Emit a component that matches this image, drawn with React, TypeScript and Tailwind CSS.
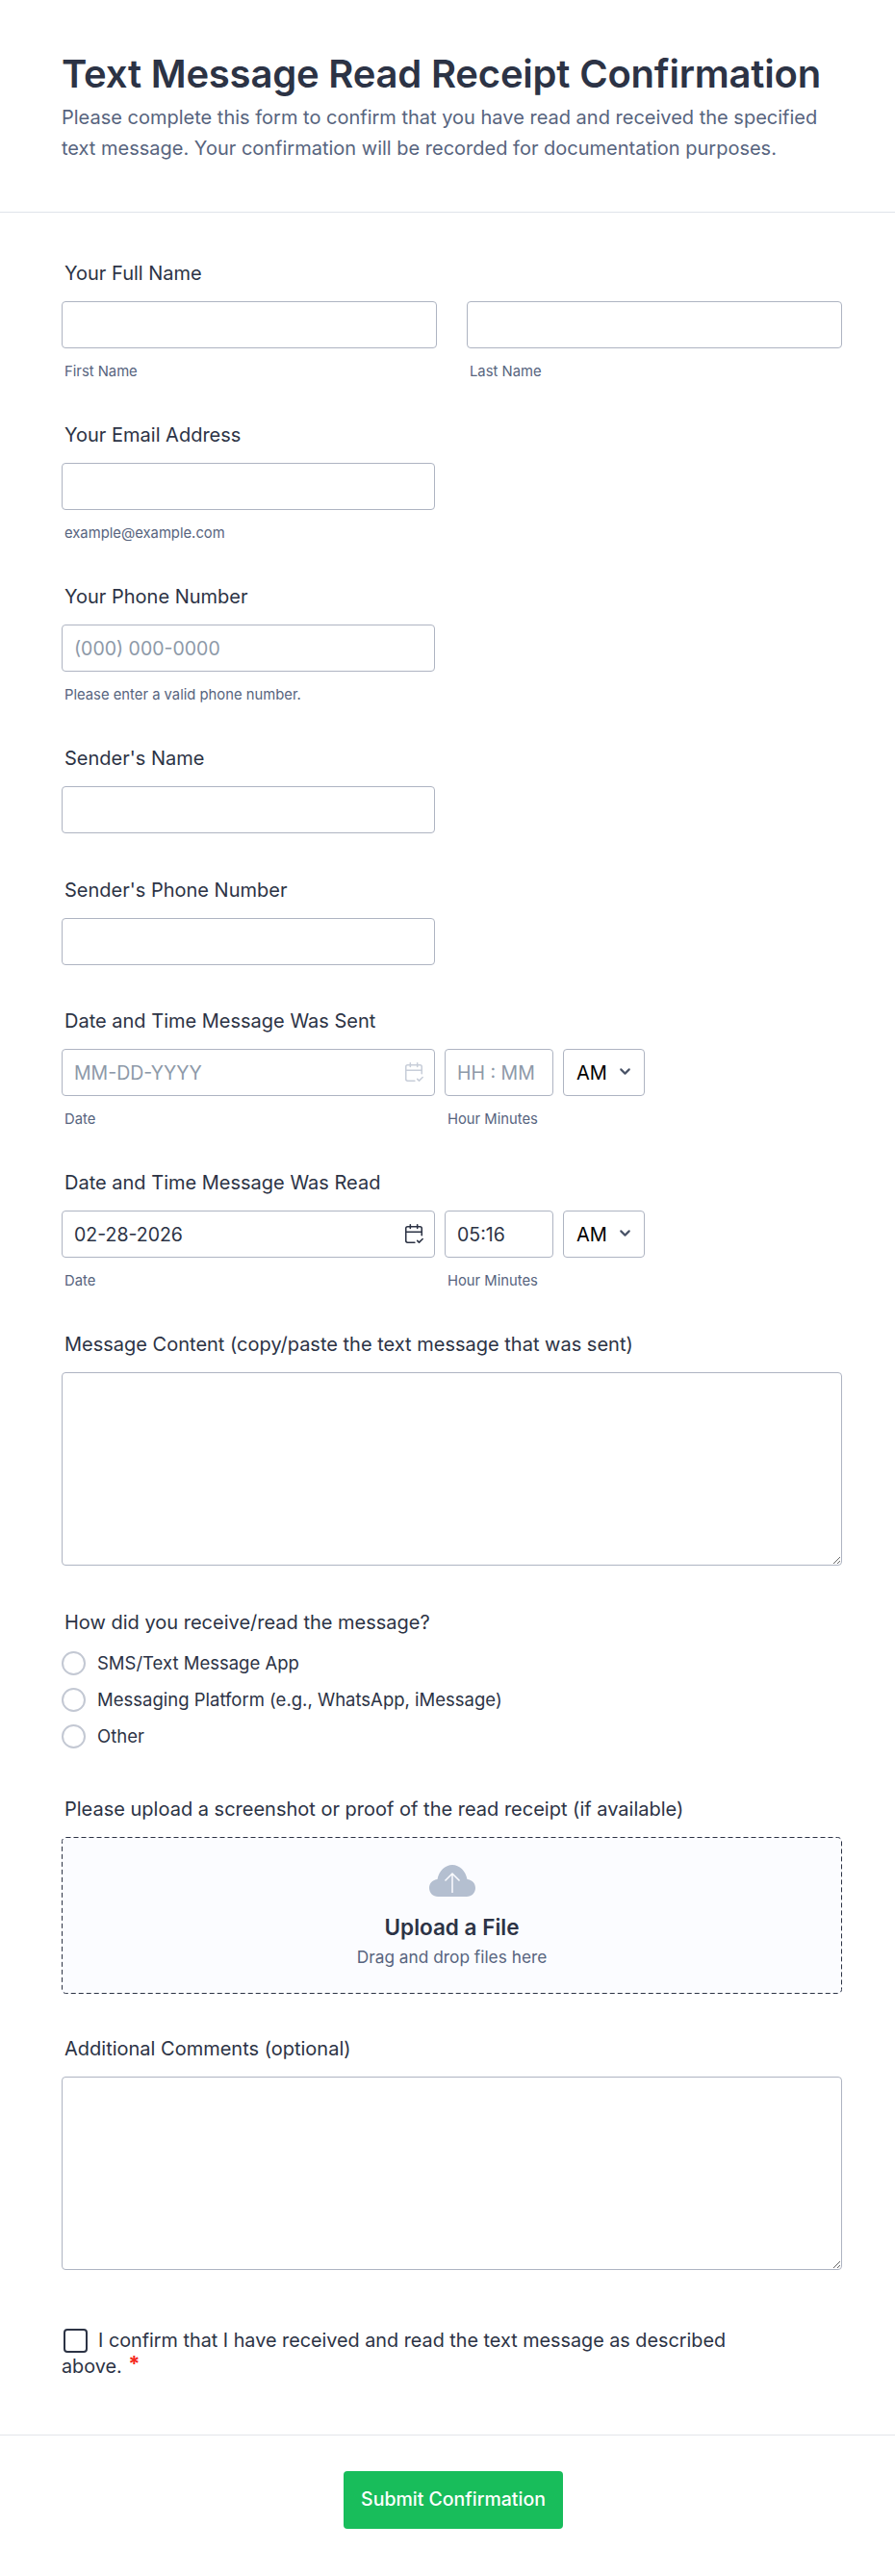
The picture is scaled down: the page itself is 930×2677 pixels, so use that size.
import { CalendarCheck2, ChevronDown } from 'lucide-react'

const inputClass =
  'h-[49px] w-full rounded-[4px] border border-[#aeb4c2] bg-white px-[12px] text-[19.5px] text-[#2c3345] outline-none placeholder:text-[#8d99a8]'

function Label({ children }: { children: React.ReactNode }) {
  return <label className="mb-[17px] block pl-[3px] text-[20px] leading-[24px] font-normal text-[#2c3345]">{children}</label>
}

function Sub({ children }: { children: React.ReactNode }) {
  return <p className="mt-[16px] pl-[3px] text-[14.8px] leading-[16px] text-[#57647e]">{children}</p>
}

function DateTimeField({ label, date, time }: { label: string; date?: string; time?: string }) {
  return (
    <div className="mb-[46px]">
      <Label>{label}</Label>
      <div className="flex w-[606px] items-start">
        <div className="w-[388px]">
          <div className="relative">
            <input className={inputClass} placeholder="MM-DD-YYYY" defaultValue={date} />
            <CalendarCheck2
              size={22}
              strokeWidth={1.7}
              className={`absolute top-[13px] right-[11px] ${date ? 'text-[#2c3345]' : 'text-[#c8ced9]'}`}
            />
          </div>
          <Sub>Date</Sub>
        </div>
        <div className="ml-[10px] w-[113px]">
          <input className={inputClass} placeholder="HH : MM" defaultValue={time} />
          <Sub>Hour Minutes</Sub>
        </div>
        <div className="relative ml-[10px] flex h-[49px] w-[85px] items-center rounded-[4px] border border-[#aeb4c2] pl-[13px] text-[20px] text-black">
          AM
          <ChevronDown size={17} strokeWidth={3} className="absolute top-[14px] right-[11px] text-[#4a5468]" />
        </div>
      </div>
    </div>
  )
}

function Radio({ children }: { children: React.ReactNode }) {
  return (
    <div className="flex h-[38px] items-center">
      <span className="h-[25px] w-[25px] rounded-full border-2 border-[#c3c8d3] bg-white" />
      <span className="ml-[12px] text-[18.5px] leading-[24px] text-[#2c3345]">{children}</span>
    </div>
  )
}

export default function App() {
  return (
    <div className="min-h-[2677px] bg-white font-['Inter',sans-serif] text-[#2c3345]">
      {/* Header */}
      <div className="h-[221px] border-b border-[#dfe3ea] px-[64px] pt-[52px]">
        <h1 className="text-[40px] leading-[50px] font-semibold tracking-[-0.2px] text-[#2c3345]">Text Message Read Receipt Confirmation</h1>
        <p className="mt-[4px] w-[800px] text-[20px] leading-[32px] text-[#57647e]">
          Please complete this form to confirm that you have read and received the specified text message. Your
          confirmation will be recorded for documentation purposes.
        </p>
      </div>

      <div className="pt-[51px] pr-[55px] pl-[64px]">
        {/* Full name */}
        <div className="mb-[46px]">
          <Label>Your Full Name</Label>
          <div className="flex gap-[31px]">
            <div className="w-[390px]">
              <input className={inputClass} />
              <Sub>First Name</Sub>
            </div>
            <div className="w-[390px]">
              <input className={inputClass} />
              <Sub>Last Name</Sub>
            </div>
          </div>
        </div>

        <div className="mb-[46px] w-[388px]">
          <Label>Your Email Address</Label>
          <input className={inputClass} />
          <Sub>example@example.com</Sub>
        </div>

        <div className="mb-[46px] w-[388px]">
          <Label>Your Phone Number</Label>
          <input className={inputClass} placeholder="(000) 000-0000" />
          <Sub>Please enter a valid phone number.</Sub>
        </div>

        <div className="mb-[47px] w-[388px]">
          <Label>Sender's Name</Label>
          <input className={inputClass} />
        </div>

        <div className="mb-[46px] w-[388px]">
          <Label>Sender's Phone Number</Label>
          <input className={inputClass} />
        </div>

        <DateTimeField label="Date and Time Message Was Sent" />
        <DateTimeField label="Date and Time Message Was Read" date="02-28-2026" time="05:16" />

        <div className="mb-[47px]">
          <Label>Message Content (copy/paste the text message that was sent)</Label>
          <textarea className="block h-[201px] w-full rounded-[4px] border border-[#aeb4c2] outline-none" />
        </div>

        {/* Receive method */}
        <div className="mb-[45px]">
          <label className="mb-[11px] block pl-[3px] text-[20px] leading-[24px] font-normal text-[#2c3345]">
            How did you receive/read the message?
          </label>
          <Radio>SMS/Text Message App</Radio>
          <Radio>Messaging Platform (e.g., WhatsApp, iMessage)</Radio>
          <Radio>Other</Radio>
        </div>

        {/* Upload */}
        <div className="mb-[45px]">
          <Label>Please upload a screenshot or proof of the read receipt (if available)</Label>
          <div className="relative flex h-[163px] flex-col items-center rounded-[4px] bg-[#fbfcff] pt-[29px]">
            {/* dashed outline, longer dashes than border-dashed gives */}
            <svg className="absolute inset-0 h-full w-full" fill="none">
              <rect x="0.5" y="0.5" width="810" height="162" rx="4" stroke="#2c3345" strokeDasharray="5 3" />
            </svg>
            <svg width="48" height="33" viewBox="0 0 48 33" className="shrink-0">
              <path
                d="M9 33C4 33 0 29 0 24c0-5 3.800-8.500 8.500-9C10 6.500 16.500 0 24 0s14 6.500 15.500 15c4.700.5 8.500 4 8.500 9 0 5-4 9-9 9H9z"
                fill="#b4bfd0"
              />
              <path d="M24 29V9M16.500 16.500 24 9l7.500 7.500" fill="none" stroke="#fbfcff" strokeWidth="1.500" />
            </svg>
            <p className="mt-[18px] text-[22.500px] leading-[28px] font-semibold text-[#2c3345]">Upload a File</p>
            <p className="mt-[5px] text-[17.300px] leading-[24px] text-[#57647e]">Drag and drop files here</p>
          </div>
        </div>

        <div className="mb-[60px]">
          <Label>Additional Comments (optional)</Label>
          <textarea className="block h-[201px] w-full rounded-[4px] border border-[#aeb4c2] outline-none" />
        </div>

        {/* Confirm checkbox */}
        <div className="w-[720px] text-[19.800px] leading-[27px] text-[#2c3345]">
          <span className="mr-[11px] ml-[2px] inline-block h-[25px] w-[25px] rounded-[4px] border-2 border-[#2c3345] align-[-6px]" />
          I confirm that I have received and read the text message as described above.{' '}
          <span className="ml-[1px] align-[2px] text-[22px] leading-[20px] font-bold text-[#f5281e]">*</span>
        </div>
      </div>

      {/* Footer */}
      <div className="mt-[57px] flex justify-center border-t border-[#e3e5ea] pt-[37px] pb-[48px] pl-[12px]">
        <button className="h-[60px] w-[228px] rounded-[4px] bg-[#18bd5b] text-[19.500px] font-medium text-white">
          Submit Confirmation
        </button>
      </div>
    </div>
  )
}
